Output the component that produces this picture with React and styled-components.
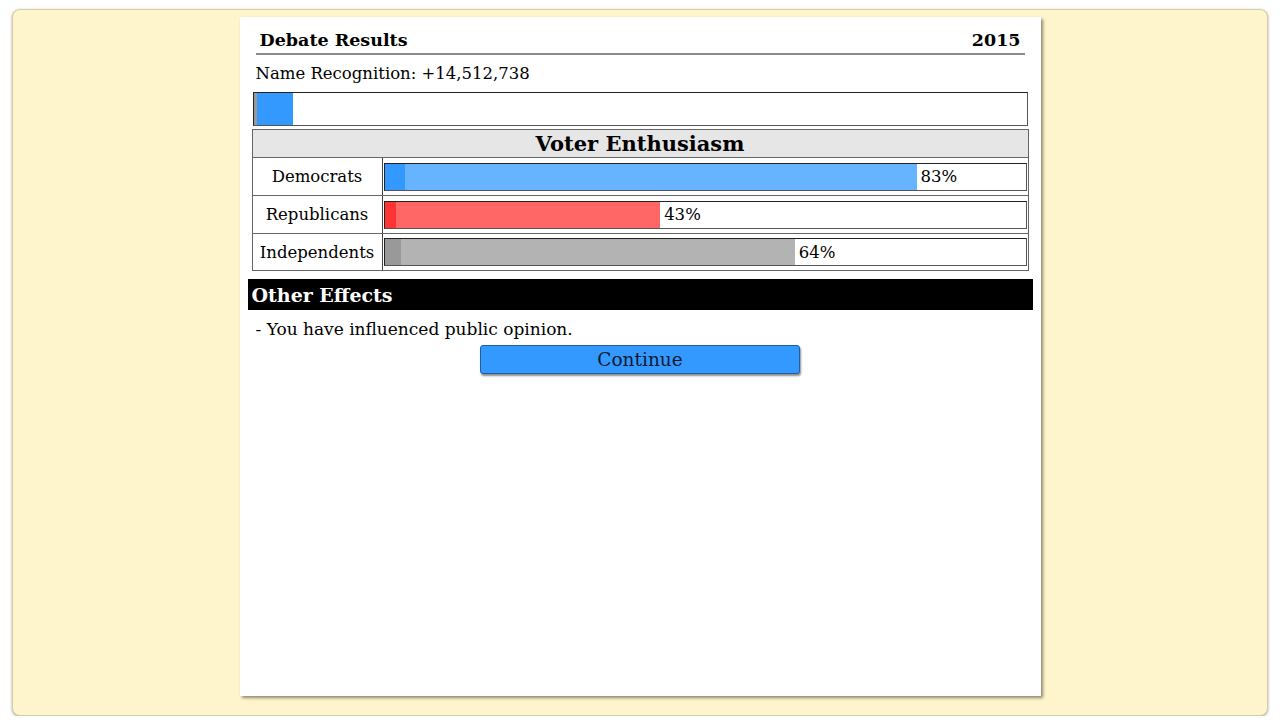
import React from "react";
import styled, { createGlobalStyle } from "styled-components";

const Global = createGlobalStyle`
  html, body { margin: 0; padding: 0; background: #ffffff; }
  body { font-family: "DejaVu Serif", Georgia, serif; color: #000; }
  * { box-sizing: border-box; }
`;

const Frame = styled.div`
  margin: 9px 12px 0;
  height: 707px;
  background: #fff5cc;
  border: 1px solid #d6cda6;
  border-radius: 8px;
  box-shadow: 0 1px 3px rgba(0, 0, 0, 0.35);
  padding-top: 7px;
`;

const Card = styled.div`
  width: 801px;
  height: 679px;
  margin: 0 auto;
  background: #ffffff;
  box-shadow: 2px 2px 3px rgba(0, 0, 0, 0.45);
  padding: 0 8px;
  display: flex;
  flex-direction: column;
`;

const Header = styled.div`
  margin: 0 8px;
  padding: 9px 4px 0;
  height: 38px;
  display: flex;
  justify-content: space-between;
  align-items: center;
  border-bottom: 2px solid #8a8a8a;
  font-weight: bold;
  font-size: 17.5px;
`;

const Line = styled.div`
  font-size: ${(p) => p.$size || 16.5}px;
  line-height: 22px;
  padding-left: ${(p) => p.$indent || 8}px;
  margin-top: ${(p) => p.$top || 0}px;
`;

const Track = styled.div`
  position: relative;
  height: ${(p) => p.$h}px;
  border: 1px solid #222;
  border-right-color: #555;
  border-bottom-color: #555;
  background: #fff;
  display: flex;
  align-items: center;
  margin: ${(p) => p.$margin || "0"};
`;

const Fill = styled.div`
  height: 100%;
  width: ${(p) => p.$w}%;
  background: ${(p) => p.$light};
  border-left: ${(p) => p.$edge}px solid ${(p) => p.$dark};
  flex: none;
`;

const Pct = styled.span`
  font-size: 16.5px;
  padding-left: 4px;
`;

const Table = styled.table`
  margin: 3px 4px 0;
  width: calc(100% - 8px);
  border-collapse: collapse;
  border: 1px solid #222;
`;

const HeadCell = styled.th`
  height: 28px;
  background: #e6e6e6;
  border: 1px solid #666;
  font-size: 21px;
  font-weight: bold;
  padding: 0;
  line-height: 26px;
`;

const Label = styled.td`
  width: 130px;
  height: ${(p) => p.$h || 38}px;
  border: 1px solid #666;
  border-right-color: #444;
  text-align: center;
  font-size: 16.5px;
  padding: 0;
`;

const BarCell = styled.td`
  border: 1px solid #666;
  padding: 0 1px;
`;

const BlackBar = styled.div`
  margin-top: 8px;
  height: 31px;
  background: #000;
  color: #fff;
  font-weight: bold;
  font-size: 19px;
  display: flex;
  align-items: center;
  padding-left: 4px;
`;

const Button = styled.button`
  align-self: center;
  width: 320px;
  height: 29px;
  margin-top: 5px;
  background: #3399ff;
  border: 1px solid #1f5f9f;
  border-radius: 3px;
  box-shadow: 1px 2px 2px rgba(0, 0, 0, 0.45);
  font-family: "DejaVu Serif", Georgia, serif;
  font-size: 18.5px;
  color: #0d1a33;
  padding: 0;
  cursor: pointer;
`;

const parties = [
  { name: "Democrats", pct: 83, dark: "#3399ff", light: "#66b3ff", edge: 20, h: 38 },
  { name: "Republicans", pct: 43, dark: "#ff3333", light: "#ff6666", edge: 11, h: 38 },
  { name: "Independents", pct: 64, dark: "#999999", light: "#b3b3b3", edge: 16, h: 37 },
];

export default function App() {
  return (
    <>
      <Global />
      <Frame>
        <Card>
          <Header>
            <span>Debate Results</span>
            <span>2015</span>
          </Header>
          <Line $top={8}>Name Recognition: +14,512,738</Line>
          <Track $h={34} $margin="7px 5px 0">
            <Fill $w={5.1} $light="#3399ff" $dark="#999999" $edge={3} />
          </Track>
          <Table>
            <thead>
              <tr>
                <HeadCell colSpan={2}>Voter Enthusiasm</HeadCell>
              </tr>
            </thead>
            <tbody>
              {parties.map((p) => (
                <tr key={p.name}>
                  <Label $h={p.h}>{p.name}</Label>
                  <BarCell>
                    <Track $h={28}>
                      <Fill $w={p.pct} $light={p.light} $dark={p.dark} $edge={p.edge} />
                      <Pct>{p.pct}%</Pct>
                    </Track>
                  </BarCell>
                </tr>
              ))}
            </tbody>
          </Table>
          <BlackBar>Other Effects</BlackBar>
          <Line $top={8} $size={17}>- You have influenced public opinion.</Line>
          <Button>Continue</Button>
        </Card>
      </Frame>
    </>
  );
}
